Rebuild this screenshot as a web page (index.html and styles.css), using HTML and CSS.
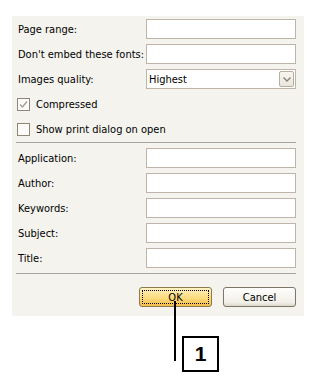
FILE: index.html
```html
<!DOCTYPE html>
<html lang="en">
<head>
  <meta charset="UTF-8">
  <title>PDF Export Options</title>
  <link rel="stylesheet" href="styles.css">
</head>
<body>
  <div class="dialog">
    <div class="section first">
      <div class="row">
        <label class="label">Page range:</label>
        <input class="field" type="text">
      </div>
      <div class="row">
        <label class="label">Don't embed these fonts:</label>
        <input class="field" type="text">
      </div>
      <div class="row">
        <label class="label">Images quality:</label>
        <div class="select">
          <span>Highest</span>
          <span class="select-btn">
            <svg width="8" height="5" viewBox="0 0 8 5"><path d="M0.5 0.5 L4 4 L7.5 0.5" fill="none" stroke="#8a7f70" stroke-width="1.3"/></svg>
          </span>
        </div>
      </div>
      <div class="row">
        <span class="check">
          <svg width="9" height="9" viewBox="0 0 9 9"><path d="M1 4.5 L3.5 7 L8 1.5" fill="none" stroke="#a39d92" stroke-width="1.4"/></svg>
        </span>
        <span class="check-label">Compressed</span>
      </div>
      <div class="row">
        <span class="check"></span>
        <span class="check-label">Show print dialog on open</span>
      </div>
    </div>

    <div class="separator"></div>

    <div class="section">
      <div class="row">
        <label class="label">Application:</label>
        <input class="field" type="text">
      </div>
      <div class="row">
        <label class="label">Author:</label>
        <input class="field" type="text">
      </div>
      <div class="row">
        <label class="label">Keywords:</label>
        <input class="field" type="text">
      </div>
      <div class="row">
        <label class="label">Subject:</label>
        <input class="field" type="text">
      </div>
      <div class="row">
        <label class="label">Title:</label>
        <input class="field" type="text">
      </div>
    </div>

    <div class="separator lower"></div>

    <div class="buttons">
      <button class="button ok"><span class="focus">OK</span></button>
      <button class="button">Cancel</button>
    </div>
  </div>

  <!-- callout marker -->
  <div class="callout-line"></div>
  <div class="callout">1</div>
</body>
</html>
```

FILE: styles.css
```css
body {
  margin: 0;
  padding: 16px 0 0 12px;
  font-family: Tahoma, "DejaVu Sans Condensed", "Liberation Sans", sans-serif;
  font-size: 11px;
  color: #000;
  background: #fff;
}

.dialog {
  width: 292px;
  height: 300px;
  box-sizing: border-box;
  background-color: #f4f3ee;
  padding: 0 8px 0 6px;
}

.section {
  display: flex;
  flex-direction: column;
  gap: 5px;
  padding-top: 5px;
}

.section.first {
  padding-top: 3px;
}

.row {
  display: flex;
  align-items: center;
  height: 20px;
}

.label {
  width: 128px;
  flex: none;
}

.field,
.select {
  width: 150px;
  height: 20px;
  box-sizing: border-box;
  border: 1px solid #bfb4a8;
  background: #fff;
  margin: 0;
  padding: 0 2px;
  font: inherit;
}

.select {
  display: flex;
  align-items: center;
  justify-content: space-between;
  padding: 0 1px 0 2px;
}

.select-btn {
  width: 15px;
  height: 16px;
  box-sizing: border-box;
  border: 1px solid #b9ad9e;
  border-radius: 2px;
  background: linear-gradient(#f7f6f1, #e9e6dc);
  display: flex;
  align-items: center;
  justify-content: center;
}

.check {
  width: 13px;
  height: 13px;
  box-sizing: border-box;
  border: 1px solid #8f8678;
  background: #fcfcfa;
  margin-left: -1px;
  display: flex;
  align-items: center;
  justify-content: center;
}

.check-label {
  margin-left: 6px;
}

.separator {
  height: 1px;
  background-color: #a7a59f;
  margin: 3px 0 0 -2px;
}

.separator.lower {
  margin-top: 5px;
}

.buttons {
  display: flex;
  justify-content: flex-end;
  gap: 11px;
  margin-top: 13px;
}

.button {
  width: 73px;
  height: 20px;
  box-sizing: border-box;
  border: 1px solid #7d7567;
  border-radius: 3px;
  background: linear-gradient(#fefefd, #f1efe8 80%, #dcd8cb);
  font: inherit;
  color: #000;
  padding: 0;
}

.button.ok {
  border-color: #8d7a4f;
  background: linear-gradient(#fff2c4, #fcd878 60%, #f3bd4a);
  padding: 2px;
}

.focus {
  display: flex;
  align-items: center;
  justify-content: center;
  height: 100%;
  box-sizing: border-box;
  border: 1px dotted #000;
}

.callout-line {
  position: absolute;
  left: 174px;
  top: 301px;
  width: 2px;
  height: 60px;
  background: #000;
}

.callout {
  position: absolute;
  left: 182px;
  top: 336px;
  width: 37px;
  height: 36px;
  box-sizing: border-box;
  border: 2px solid #000;
  background: #fff;
  font-family: "Liberation Sans", Arial, sans-serif;
  font-weight: bold;
  font-size: 21px;
  display: flex;
  align-items: center;
  justify-content: center;
}
```
